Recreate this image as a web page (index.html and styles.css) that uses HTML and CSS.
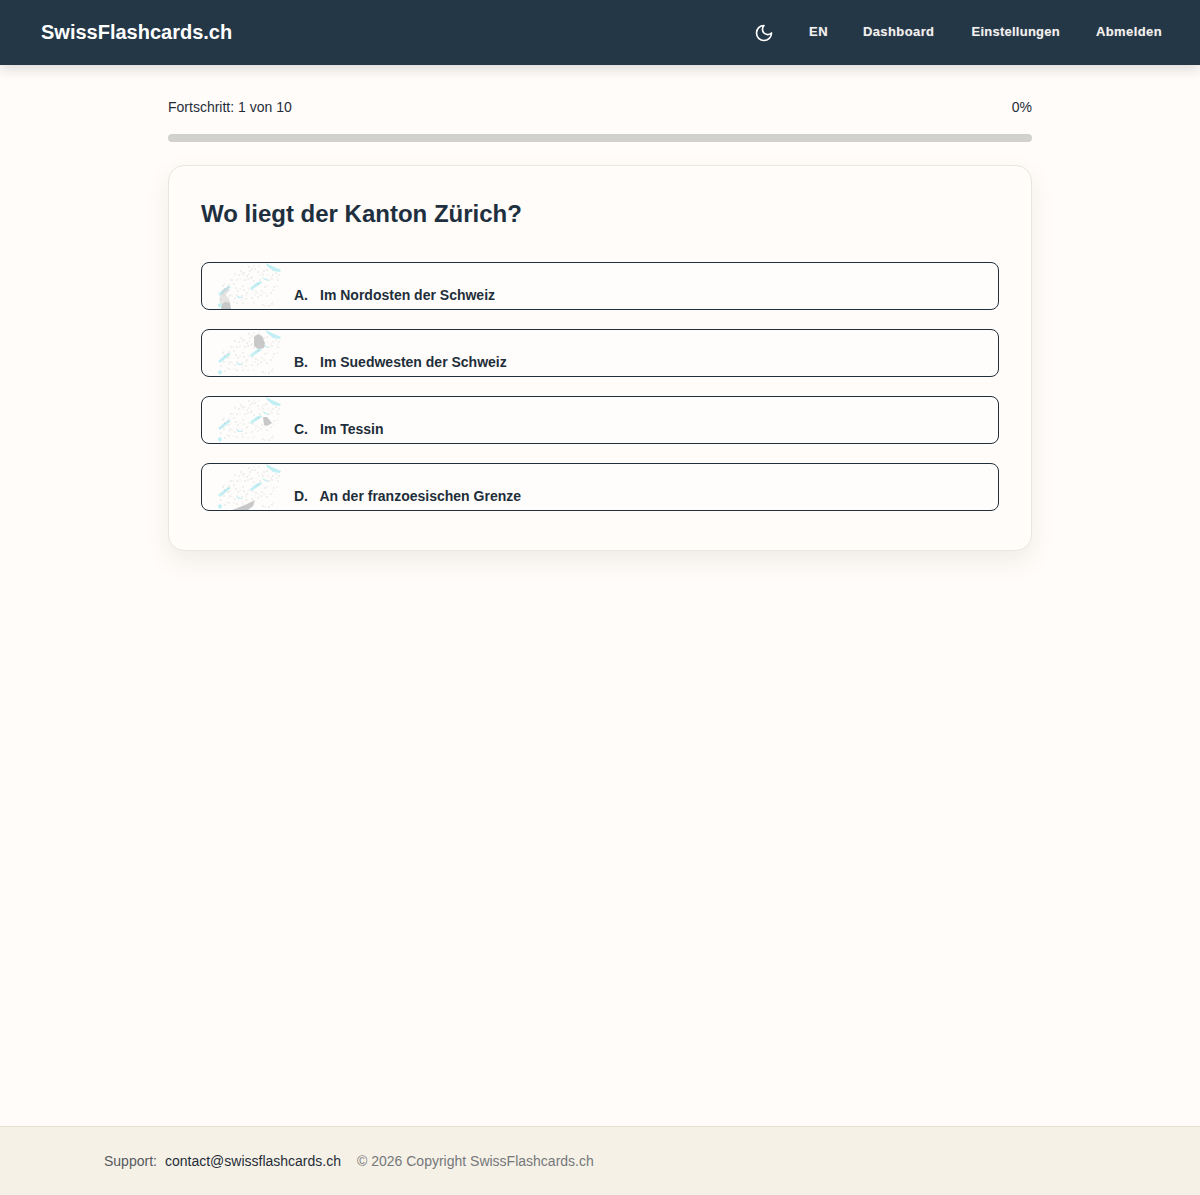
FILE: index.html
```html
<!DOCTYPE html>
<html lang="de">
<head>
<meta charset="utf-8">
<title>SwissFlashcards.ch</title>
<link rel="stylesheet" href="styles.css">
</head>
<body>
<svg class="defs" width="0" height="0" aria-hidden="true">
  <symbol id="swiss" viewBox="0 0 66 47">
    <g class="lake">
      <path d="M49 1l6 3 9 4-1 2-7-1-6-5z"/>
      <path d="M33 26l6-5 5-2 1 2-6 4-5 3z"/>
      <path d="M1 32l6-5 5-3 2 1-6 5-5 4z"/>
      <path d="M1 42l3-1 1 3-2 2-2-2z"/>
      <path d="M19 33l4 2 3 0-1 1-4 0z"/>
      <path d="M44 15l6 2 2 2-4-1z"/>
    </g>
    <path class="speck" d="M6 24h.01M12 23h.01M14 18h.01M20 18h.01M22 13h.01M27 11h.01M30 14h.01M33 9h.01M38 7h.01M41 10h.01M47 9h.01M50 8h.01M56 13h.01M59 11h.01M62 13h.01M8 27h.01M11 29h.01M17 22h.01M19 26h.01M26 24h.01M28 18h.01M34 16h.01M37 19h.01M43 18h.01M46 13h.01M52 18h.01M55 17h.01M61 18h.01M7 33h.01M4 37h.01M13 33h.01M18 36h.01M21 29h.01M27 28h.01M30 31h.01M36 28h.01M39 30h.01M45 29h.01M48 25h.01M54 31h.01M57 25h.01M12 40h.01M8 42h.01M20 41h.01M26 41h.01M29 37h.01M35 36h.01M41 35h.01M44 33h.01M50 34h.01M46 43h.01M52 44h.01M55 42h.01M18 12h.01M24 9h.01M32 5h.01M35 7h.01M11 25h.01M25 34h.01M41 22h.01M31 17h.01"/>
    <path class="speck light" d="M7 22h.01M13 28h.01M16 18h.01M23 17h.01M26 13h.01M32 12h.01M35 15h.01M42 13h.01M45 11h.01M51 13h.01M54 15h.01M60 15h.01M6 31h.01M12 35h.01M15 34h.01M20 33h.01M23 27h.01M29 33h.01M32 27h.01M38 33h.01M41 31h.01M47 31h.01M50 24h.01M56 28h.01M60 24h.01M10 39h.01M17 40h.01M25 38h.01M31 42h.01M37 41h.01M48 44h.01M56 40h.01M37 4h.01M42 4h.01M25 11h.01"/>
  </symbol>
</svg>

<header class="topbar">
  <a class="brand">SwissFlashcards.ch</a>
  <nav class="nav">
    <svg class="moon" viewBox="0 0 24 24" width="20" height="20"><path d="M12 3a6 6 0 0 0 9 9 9 9 0 1 1-9-9Z"/></svg>
    <a class="nav-link lang">EN</a>
    <a class="nav-link dash">Dashboard</a>
    <a class="nav-link settings">Einstellungen</a>
    <a class="nav-link">Abmelden</a>
  </nav>
</header>

<main class="main">
  <div class="progress-row"><span>Fortschritt: 1 von 10</span><span>0%</span></div>
  <div class="progress-track"></div>

  <section class="card">
    <h1 class="question">Wo liegt der Kanton Zürich?</h1>
    <div class="options">
      <button class="option">
        <svg class="map" viewBox="0 0 66 47"><use href="#swiss"/><path class="region" d="M4 47l1-5 3-2 5 1 1 6z"/><path class="region faint" d="M2 38l3-10 6-3 1 3-3 5 3 4 1 5H4z"/></svg>
        <span class="letter">A.</span><span class="answer">Im Nordosten der Schweiz</span>
      </button>
      <button class="option">
        <svg class="map" viewBox="0 0 66 47"><use href="#swiss"/><path class="region" d="M37 8l4-3 4 2 3 7-1 5-6 1-4-3z"/></svg>
        <span class="letter">B.</span><span class="answer">Im Suedwesten der Schweiz</span>
      </button>
      <button class="option">
        <svg class="map" viewBox="0 0 66 47"><use href="#swiss"/><path class="region" d="M46 21h4l5 6-5 3-3-1z"/></svg>
        <span class="letter">C.</span><span class="answer">Im Tessin</span>
      </button>
      <button class="option">
        <svg class="map" viewBox="0 0 66 47"><use href="#swiss"/><path class="region" d="M15 47l13-5 10-5-2 6-5 4z"/></svg>
        <span class="letter">D.</span><span class="answer answer-d">An der franzoesischen Grenze</span>
      </button>
    </div>
  </section>
</main>

<footer class="footer">
  <span class="support">Support:</span>
  <a class="mail">contact@swissflashcards.ch</a>
  <span class="copy">© 2026 Copyright SwissFlashcards.ch</span>
</footer>
</body>
</html>
```
FILE: styles.css
```css
* { box-sizing: border-box; }
html, body { margin: 0; padding: 0; }
body {
  min-height: 1195px;
  display: flex;
  flex-direction: column;
  background: #fffcf9;
  color: #1f2d38;
  font-family: "Liberation Sans", Arial, sans-serif;
}
.defs { position: absolute; }

.topbar {
  height: 65px;
  display: flex;
  align-items: center;
  justify-content: space-between;
  padding: 0 38px 0 41px;
  background: #243747;
  box-shadow: 0 4px 12px rgba(30, 40, 50, 0.16);
  color: #fff;
}
.brand { font-size: 20px; font-weight: 700; }
.nav { display: flex; align-items: center; }
.moon { fill: none; stroke: #fff; stroke-width: 2; stroke-linecap: round; stroke-linejoin: round; margin-right: 35px; }
.nav-link {
  padding-bottom: 2px;
  font-size: 13px;
  font-weight: 700;
  color: #f2f0ec;
  letter-spacing: 0.4px;
  text-shadow: 0 0 1px rgba(255, 255, 255, 0.35);
}
.lang { margin-right: 35px; }
.dash { margin-right: 37px; }
.settings { margin-right: 36px; letter-spacing: 0.25px; }

.main { flex: 1; width: 864px; margin: 0 auto; padding-top: 32px; }
.progress-row {
  display: flex;
  justify-content: space-between;
  font-size: 14px;
  line-height: 20px;
  margin-bottom: 17px;
}
.progress-track { height: 8px; border-radius: 4px; background: #d1d2cd; margin-bottom: 23px; }

.card {
  height: 386px;
  padding: 32px;
  background: #fffcf9;
  border: 1px solid #e9e6e0;
  border-radius: 16px;
  box-shadow: 0 10px 24px rgba(60, 50, 40, 0.08);
}
.question { margin: 0 0 32px; font-size: 24px; line-height: 32px; font-weight: 700; color: #1e3040; }
.options { display: flex; flex-direction: column; gap: 19px; }
.option {
  display: flex;
  align-items: flex-end;
  height: 48px;
  padding: 0 0 6px 15px;
  background: #fffdfb;
  border: 1px solid #1f2f3d;
  border-radius: 8px;
  overflow: hidden;
  font: 700 14px/16px "Liberation Sans", Arial, sans-serif;
  color: #1e2e3a;
  text-align: left;
}
.map { width: 66px; height: 47px; margin: 0 11px -6px 0; flex: none; align-self: flex-end; }
.lake { fill: #c2eff4; }
.speck { fill: none; stroke: #7f8c8e; stroke-width: 0.75; stroke-linecap: round; opacity: 0.8; }
.light { stroke: #c4cbcb; opacity: 1; }
.region { fill: #c8c8c8; }
.faint { opacity: 0.45; }
.letter { width: 26px; flex: none; }
.answer-d { margin-left: -0.5px; }

.footer {
  height: 69px;
  display: flex;
  align-items: center;
  padding-left: 104px;
  background: #f6f1e7;
  border-top: 1px solid #e8e2d4;
  font-size: 14px;
}
.support { color: #555a5e; margin-right: 8px; }
.mail { color: #1f2d38; margin-right: 16px; }
.copy { color: #74787a; }
```
